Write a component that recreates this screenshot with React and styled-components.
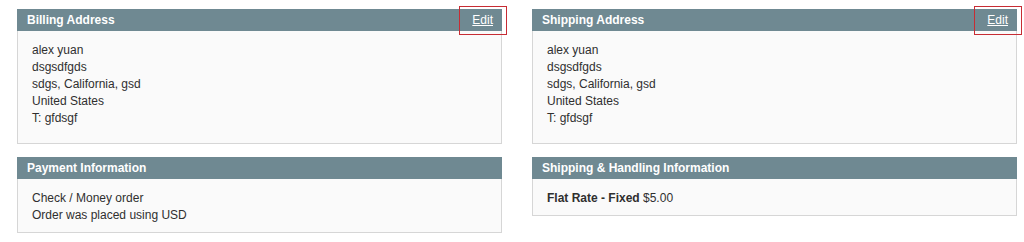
import styled, { createGlobalStyle } from 'styled-components';

const GlobalStyle = createGlobalStyle`
  body {
    margin: 0;
    background: #fff;
    font-family: Arial, "Liberation Sans", sans-serif;
    font-size: 12px;
    color: #2f2f2f;
  }
`;

const Page = styled.div`
  display: grid;
  grid-template-columns: 485px 485px;
  column-gap: 30px;
  row-gap: 13px;
  padding: 9px 0 0 17px;
  align-items: start;
`;

const Box = styled.section`
  border: 1px solid #d6d6d6;
  border-top: 0;
  background: #fafafa;
`;

const Head = styled.header`
  position: relative;
  display: flex;
  align-items: center;
  justify-content: space-between;
  height: 22px;
  margin: 0 -1px;
  padding: 0 9px 0 10px;
  background: #6f8992;
  color: #fff;
  font-weight: bold;
  font-size: 12px;
`;

const EditLink = styled.a`
  position: relative;
  color: #fff;
  font-weight: normal;
  text-decoration: underline;

  /* red highlight frame from the annotated screenshot */
  &::after {
    content: '';
    position: absolute;
    left: -13px;
    right: -14px;
    top: -7px;
    bottom: -8px;
    border: 1px solid #c72c34;
  }
`;

const Body = styled.div`
  padding: ${({ $pad }) => $pad};
  line-height: 17px;
`;

const Line = styled.div``;

const Strong = styled.strong`
  font-weight: bold;
`;

function Panel({ title, edit, pad, children }) {
  return (
    <Box>
      <Head>
        <span>{title}</span>
        {edit && <EditLink href="#">Edit</EditLink>}
      </Head>
      <Body $pad={pad}>{children}</Body>
    </Box>
  );
}

const address = ['alex yuan', 'dsgsdfgds', 'sdgs, California, gsd', 'United States', 'T: gfdsgf'];

export default function App() {
  return (
    <>
      <GlobalStyle />
      <Page>
        <Panel title="Billing Address" edit pad="11px 14px 16px">
          {address.map((l) => <Line key={l}>{l}</Line>)}
        </Panel>
        <Panel title="Shipping Address" edit pad="11px 14px 16px">
          {address.map((l) => <Line key={l}>{l}</Line>)}
        </Panel>
        <Panel title="Payment Information" pad="11px 14px 8px">
          <Line>Check / Money order</Line>
          <Line>Order was placed using USD</Line>
        </Panel>
        <Panel title="Shipping &amp; Handling Information" pad="11px 14px 8px">
          <Line>
            <Strong>Flat Rate - Fixed</Strong> $5.00
          </Line>
        </Panel>
      </Page>
    </>
  );
}
